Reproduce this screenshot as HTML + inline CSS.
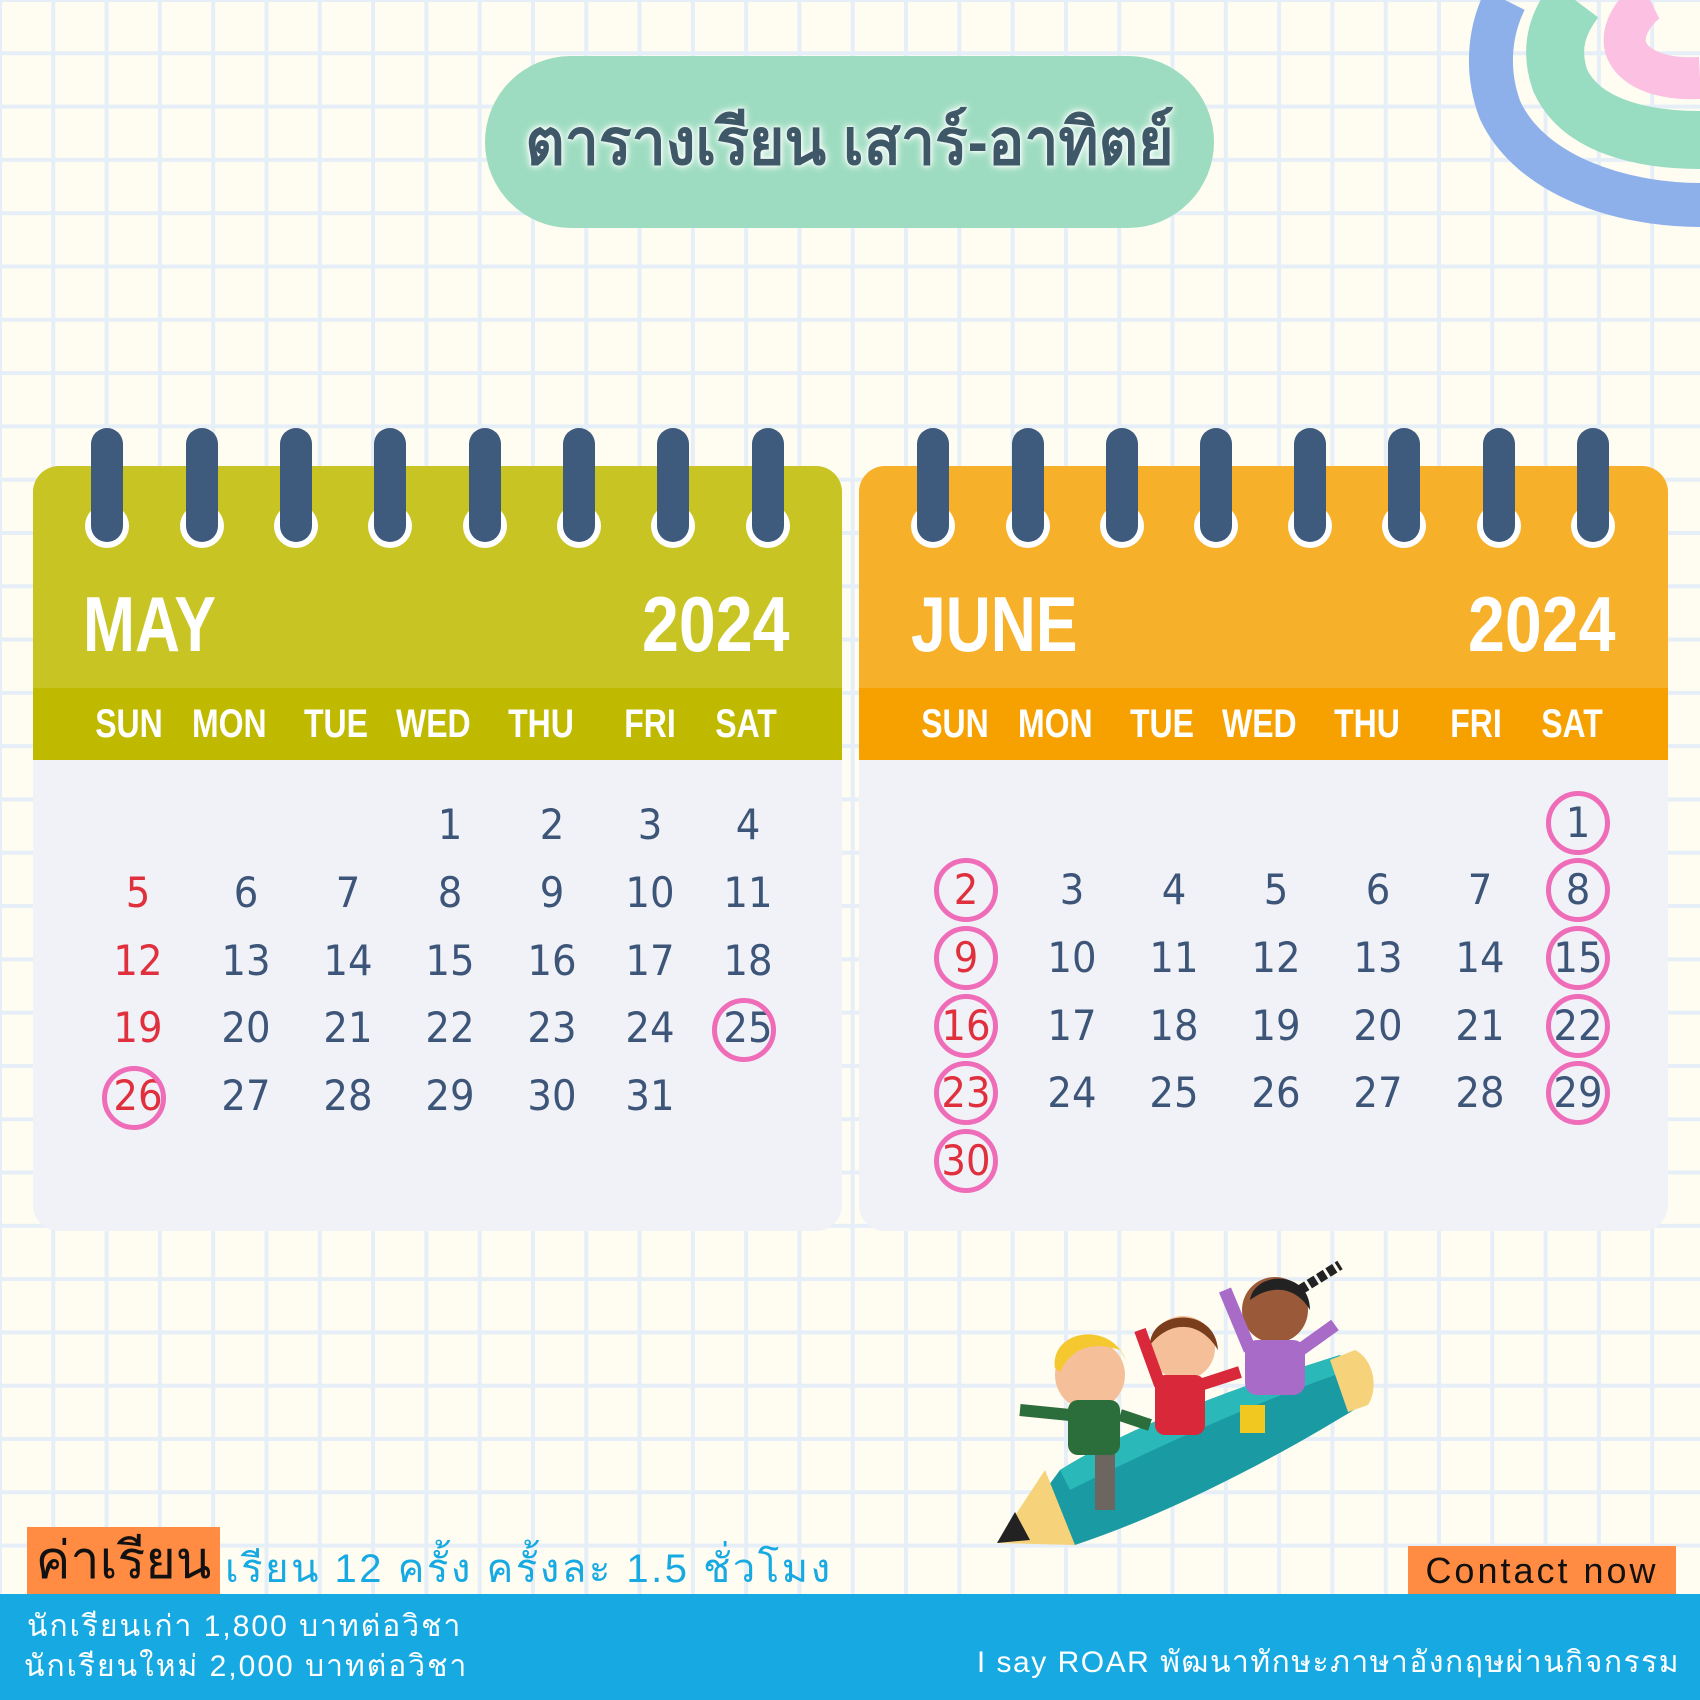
<!DOCTYPE html>
<html><head><meta charset="utf-8"><style>
*{margin:0;padding:0;box-sizing:border-box}
body{width:1700px;height:1700px;position:relative;overflow:hidden;background-color:#fffdf2;
background-image:linear-gradient(90deg,#e6eef8 4px,transparent 4px),linear-gradient(180deg,#e6eef8 4px,transparent 4px);
background-size:53.3px 53.3px;background-position:-2px -2px;font-family:"Liberation Sans","Noto Sans CJK SC",sans-serif}
.abs{position:absolute}
.pill{left:485px;top:56px;width:729px;height:172px;border-radius:86px;background:#9ddcc0}
.title{left:485px;top:56px;width:729px;height:172px;line-height:172px;text-align:center;font-size:64px;font-weight:bold;color:#3f5868;text-shadow:0 0 10px #fff,0 0 6px #fff,0 0 3px #fff;font-family:"Liberation Sans","Noto Sans CJK SC","WenQuanYi Zen Hei",sans-serif;transform:scaleX(0.95)}
.card{top:466px;width:809px;height:765px;border-radius:26px;background:#f0f2f7;overflow:hidden}
.head{position:absolute;left:0;top:0;width:100%;height:222px}
.band{position:absolute;left:0;top:222px;width:100%;height:72px}
.nar{font-family:"Liberation Sans",sans-serif;font-weight:bold;color:#fff}
.mon{position:absolute;top:118px;font-size:78px;line-height:80px}
.ml{transform:scaleX(0.8);transform-origin:left center}
.mr{transform:scaleX(0.85);transform-origin:right center}
.day{position:absolute;top:238px;font-size:40px;width:90px;text-align:center;line-height:40px;transform:scaleX(0.8)}
.ring{position:absolute;top:428px;width:32px;height:114px;border-radius:16px;background:#3e5b7e}
.hole{position:absolute;top:504px;width:44px;height:44px;border-radius:50%;background:#fff}
.n{position:absolute;width:80px;text-align:center;font-size:42px;line-height:50px;color:#3d5578;font-family:"DejaVu Sans","Liberation Sans",sans-serif;transform:scaleX(0.92)}
.r{color:#e0303e}
.c{position:absolute;width:64px;height:64px;border:5px solid #ee6cb8;border-radius:50%}
.bottom{left:0;top:1594px;width:1700px;height:106px;background:#17a9e1}
.th{font-family:"Liberation Sans","Noto Sans CJK SC","WenQuanYi Zen Hei",sans-serif}
</style></head><body>
<svg class="abs" style="left:1450px;top:0" width="250" height="250" viewBox="1450 0 250 250">
<path d="M1700 205 C1620 205 1530 175 1500 110 C1485 70 1490 30 1505 0" fill="none" stroke="#8eb0ea" stroke-width="44"/>
<path d="M1700 140 C1640 140 1580 125 1560 80 C1548 45 1560 20 1575 0" fill="none" stroke="#98dcc2" stroke-width="58"/>
<path d="M1700 78 C1660 80 1630 68 1625 45 C1622 25 1640 5 1650 0" fill="none" stroke="#fcc0e2" stroke-width="42"/>
</svg>
<div class="abs pill"></div>
<div class="abs title">ตารางเรียน เสาร์-อาทิตย์</div>

<div class="abs card" style="left:33px">
<div class="head" style="background:#c8c424"></div>
<div class="band" style="background:#bfba00"></div>
<div class="nar mon ml" style="left:50px">MAY</div>
<div class="nar mon mr" style="right:52px">2024</div>
<div class="nar day" style="left:51px">SUN</div><div class="nar day" style="left:150px">MON</div><div class="nar day" style="left:258px">TUE</div><div class="nar day" style="left:354px">WED</div><div class="nar day" style="left:463px">THU</div><div class="nar day" style="left:572px">FRI</div><div class="nar day" style="left:668px">SAT</div>
</div>
<div class="abs card" style="left:859px">
<div class="head" style="background:#f7b02a"></div>
<div class="band" style="background:#f6a100"></div>
<div class="nar mon ml" style="left:52px">JUNE</div>
<div class="nar mon mr" style="right:52px">2024</div>
<div class="nar day" style="left:51px">SUN</div><div class="nar day" style="left:150px">MON</div><div class="nar day" style="left:258px">TUE</div><div class="nar day" style="left:354px">WED</div><div class="nar day" style="left:463px">THU</div><div class="nar day" style="left:572px">FRI</div><div class="nar day" style="left:668px">SAT</div>
</div>

<div id="rings"></div>
<div id="nums"></div>

<svg class="abs" style="left:980px;top:1220px" width="400" height="340" viewBox="980 1220 400 340">
<path d="M1010 1538 L1060 1470 C1140 1420 1260 1380 1340 1355 L1370 1400 C1290 1450 1180 1510 1075 1545 Z" fill="#1a9aa3"/>
<path d="M1060 1470 C1140 1420 1260 1380 1340 1355 L1350 1370 C1260 1400 1150 1450 1070 1490 Z" fill="#2ab8b8"/>
<path d="M1330 1360 L1355 1350 C1375 1360 1378 1390 1368 1405 L1348 1412 Z" fill="#f6d27a"/>
<path d="M997 1543 L1045 1470 L1075 1545 Z" fill="#f6d27a"/>
<path d="M997 1543 L1015 1512 L1030 1540 Z" fill="#222"/>
<rect x="1095" y="1440" width="20" height="70" fill="#6d6560"/>
<circle cx="1090" cy="1375" r="35" fill="#f5c099"/><path d="M1055 1368 C1050 1330 1110 1320 1126 1360 L1120 1350 C1090 1340 1070 1350 1060 1372Z" fill="#f5c830"/>
<rect x="1068" y="1400" width="52" height="55" rx="10" fill="#2c6e3b"/>
<path d="M1020 1410 L1070 1415 M1120 1415 L1150 1425" stroke="#2c6e3b" stroke-width="12"/>
<circle cx="1183" cy="1348" r="32" fill="#f5c099"/><path d="M1150 1345 C1150 1310 1215 1305 1218 1350 C1200 1320 1170 1320 1150 1345Z" fill="#7a3e1c"/>
<rect x="1155" y="1375" width="50" height="60" rx="10" fill="#d8283a"/>
<path d="M1160 1385 L1140 1330 M1200 1385 L1240 1372" stroke="#d8283a" stroke-width="12"/>
<circle cx="1275" cy="1310" r="33" fill="#9a5a3a"/><path d="M1250 1300 C1255 1270 1310 1270 1310 1310 C1295 1285 1270 1285 1250 1300Z" fill="#222"/>
<path d="M1300 1290 L1340 1265" stroke="#222" stroke-width="10" stroke-dasharray="8 3"/>
<rect x="1245" y="1340" width="60" height="55" rx="12" fill="#a86cc8"/>
<path d="M1250 1350 L1225 1290 M1300 1350 L1335 1325" stroke="#a86cc8" stroke-width="13"/>
<rect x="1240" y="1405" width="25" height="28" fill="#f0c820"/>
</svg>

<div class="abs" style="left:27px;top:1527px;width:193px;height:69px;background:#ff8c42"></div>
<div class="abs th" style="left:27px;top:1527px;width:193px;height:69px;line-height:69px;text-align:center;font-size:52px;color:#111">ค่าเรียน</div>
<div class="abs th" style="left:225px;top:1546px;font-size:40px;line-height:46px;color:#17a9e1;letter-spacing:2.5px">เรียน 12 ครั้ง ครั้งละ 1.5 ชั่วโมง</div>
<div class="abs" style="left:1408px;top:1546px;width:268px;height:50px;background:#ff8c42"></div>
<div class="abs" style="left:1408px;top:1546px;width:268px;height:50px;line-height:50px;text-align:center;font-size:36px;color:#111;letter-spacing:3px">Contact now</div>
<div class="abs bottom"></div>
<div class="abs th" style="left:27px;top:1609px;font-size:30px;line-height:36px;color:#fff;letter-spacing:2px">นักเรียนเก่า 1,800 บาทต่อวิชา</div>
<div class="abs th" style="left:24px;top:1649px;font-size:30px;line-height:36px;color:#fff;letter-spacing:2px">นักเรียนใหม่ 2,000 บาทต่อวิชา</div>
<div class="abs th" style="right:20px;top:1645px;font-size:30px;line-height:36px;color:#fff;letter-spacing:1.5px">I say ROAR พัฒนาทักษะภาษาอังกฤษผ่านกิจกรรม</div>

<script>
var R=document.getElementById('rings'),h='';
[107,202,296,390,485,579,673,768,933,1028,1122,1216,1310,1404,1499,1593].forEach(function(x){
h+='<div class="hole" style="left:'+(x-22)+'px"></div><div class="ring" style="left:'+(x-16)+'px"></div>';});
R.innerHTML=h;
var N=document.getElementById('nums'),s='';
var lx=[138,246,348,450,552,650,748],ly=[825,893,961,1028,1096];
var d=1,col=3,row=0;
for(d=1;d<=31;d++){var cls=(col==0)?' r':'';
s+='<div class="n'+cls+'" style="left:'+(lx[col]-40)+'px;top:'+(ly[row]-25)+'px">'+d+'</div>';
if(d==25||d==26)s+='<div class="c" style="left:'+(lx[col]-36)+'px;top:'+(ly[row]-30)+'px"></div>';
col++;if(col>6){col=0;row++;}}
var rx=[966,1072,1174,1276,1378,1480,1578],ry=[823,890,958,1026,1093,1161];
col=6;row=0;
for(d=1;d<=30;d++){var cl=(col==0)?' r':'';
s+='<div class="n'+cl+'" style="left:'+(rx[col]-40)+'px;top:'+(ry[row]-25)+'px">'+d+'</div>';
if(col==0||col==6)s+='<div class="c" style="left:'+(rx[col]-32)+'px;top:'+(ry[row]-32)+'px"></div>';
col++;if(col>6){col=0;row++;}}
N.innerHTML=s;
</script>
</body></html>
